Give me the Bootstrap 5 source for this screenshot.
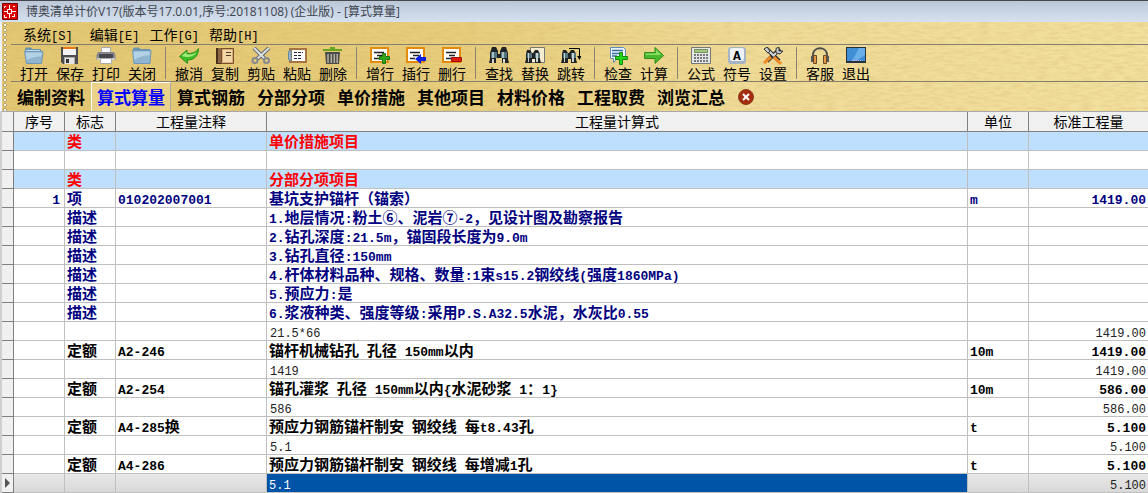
<!DOCTYPE html>
<html lang="zh-CN">
<head>
<meta charset="utf-8">
<meta name="viewport" content="width=device-width, initial-scale=1">
<title>博奥清单计价V17 - [算式算量]</title>
<link href="https://cdn.jsdelivr.net/npm/bootstrap@5.3.0/dist/css/bootstrap.min.css" rel="stylesheet">
<script src="https://cdn.jsdelivr.net/npm/bootstrap@5.3.0/dist/js/bootstrap.bundle.min.js" defer></script>
<style>
  body { font-family: "Noto Sans CJK SC", sans-serif; font-size: 14px; line-height: 18px; color: #000; background: #fff; }
  button { font: inherit; color: inherit; background: none; border: 0; padding: 0; white-space: nowrap; }
  .lt { font-family: "Liberation Mono", monospace; font-size: 13px; line-height: 0; white-space: pre; }

  /* window caption */
  .caption-bar { height: 22px; border-top: 1px solid #45484f; background: linear-gradient(#bcc8d8, #d5e1ef); }
  .caption-bar h1 { font-family: "Open Sans", "Noto Sans CJK SC", sans-serif; font-size: 12px; line-height: 20px; color: #3c434d; white-space: nowrap; }

  /* textured tool area */
  .tool-area {
    background:
      url("data:image/svg+xml,%3Csvg xmlns='http://www.w3.org/2000/svg' width='256' height='90'%3E%3Cfilter id='g'%3E%3CfeTurbulence type='fractalNoise' baseFrequency='.09 .4' numOctaves='3' stitchTiles='stitch'/%3E%3CfeColorMatrix values='0 0 0 0 .6 0 0 0 0 .42 0 0 0 0 .12 .6 0 0 0 -.22'/%3E%3C/filter%3E%3Crect width='256' height='90' filter='url(%23g)'/%3E%3C/svg%3E"),
      linear-gradient(90deg, #e3c772 0, #e7cd7c 40%, #f0dc98 65%, #f2e09e 100%);
    border-left: 2px solid #eef1f6;
    border-bottom: 1px solid #a9a9a9;
  }
  .grip { width: 9px; background: radial-gradient(circle at 2px 2px, #fff8dc 0 1px, #b0a074 1px 2px, transparent 2px) 1px 1px / 9px 5px; }
  .menu-row { height: 23px; border-bottom: 1px solid #857f6f; padding: 2px 0 0 12px; column-gap: 10px; }
  .menu-row .lt { font-size: 12px; }
  .icon-row { height: 37px; border-bottom: 1px solid #857f6f; padding: 2px 0 0 5px; }
  .tool { width: 36px; height: 34px; text-align: center; line-height: 16px; }
  .tool svg { display: block; width: 20px; height: 18px; margin: 0 auto; }
  .sep { width: 1px; height: 32px; margin: 0 5px; background: #8a8371; }
  .tab-row { height: 29px; }
  .tab-row button[role=tab] { width: 80px; height: 29px; font-size: 17px; line-height: 28px; font-weight: 700; border: 1px solid transparent; border-bottom: 0; }
  .tab-row button[aria-selected=true] { color: #00f; border-color: #fff #a7a7a7 transparent #fff; background: rgba(255, 240, 190, .3); }
  .close-tab { width: 16px; height: 16px; margin-left: 7px; }
  .close-tab svg { display: block; }

  /* quantity sheet */
  .sheet { border-left: 2px solid #d0d0d0; }
  .sheet table { width: 100%; table-layout: fixed; border-collapse: separate; border-spacing: 0; }
  .sheet th, .sheet td { height: 19px; padding: 0 2px; line-height: 18px; vertical-align: middle; border: 0 solid #bfbfbf; border-width: 0 1px 1px 0; white-space: nowrap; }
  .sheet thead th { height: 20px; line-height: 19px; font-weight: 400; text-align: center; background: #f0f0f0; border-color: #808080; }
  .sheet tbody th { background: #f0f0f0; border-color: #808080; }
  .sheet td { font-size: 15px; font-weight: 700; }
  .sheet td:last-child, .sheet th:last-child { border-right: 0; }
  .sheet td:last-child, .sheet td:nth-child(2) { text-align: right; }
  .sheet td:nth-child(2) { padding-right: 4px; }
  .group-row td { background: #bfdfff; color: #f00; }
  .item-row td { color: #000080; }
  .calc-row td { font-weight: 400; color: #222; padding-left: 3px; }
  .calc-row .lt { font-size: 12px; }
  .current-row td { background: linear-gradient(#e8e8e8, #d8d8d8); }
  .current-row td.picked { background: #0054a8; color: #fff; padding-left: 2px; }
  .current-row svg { display: block; }
</style>
</head>
<body>
<header class="caption-bar d-flex align-items-center">
  <svg class="ms-0 me-2 flex-shrink-0" width="18" height="18" viewBox="0 0 18 18" aria-hidden="true"><path fill="#d00" stroke="#700" d="M2.500.5h15v16h-15z"/><path fill="none" stroke="#fff" d="M9.500 2v4M9.500 11v4M4 8.500h3M12 8.500h4M7.500 6.500h4v4h-4zM4.500 5V3.500H6M13 3.500h2M4.500 12v2.500H7M12 13.500h3M14.500 11v3"/></svg>
  <h1 class="m-0 fw-normal">博奥清单计价V17(版本号17.0.01,序号:20181108) (企业版) - [算式算量]</h1>
</header>

<div class="tool-area d-flex">
  <div class="grip flex-shrink-0"></div>
  <div class="flex-grow-1">
    <nav class="menu-row d-flex" aria-label="菜单">
      <button type="button">系统<span class="lt">[S] </span></button>
      <button type="button">编辑<span class="lt">[E]</span></button>
      <button type="button">工作<span class="lt">[G]</span></button>
      <button type="button">帮助<span class="lt">[H]</span></button>
    </nav>

    <div class="icon-row d-flex" role="toolbar" aria-label="工具栏">
      <button type="button" class="tool"><svg viewBox="0 0 20 18"><path fill="#6d93ac" d="M1 3V1.500L2 .5h5L8.500 2H17v3H1z"/><path fill="#c3dcef" d="M2 3h14v3H2z"/><path fill="#8fb5d0" stroke="#6f98b4" d="M.5 4.500h18.500l-1.500 12h-15z"/><path fill="#b2d0e6" d="M1.500 5.500H18l-.6 4C10 9 6 12 2.500 13z"/></svg>打开</button>
      <button type="button" class="tool"><svg viewBox="0 0 20 18"><path fill="#4c4c50" d="M1 0h17v17H3l-2-2z"/><path fill="#e87818" d="M3 0h13v2H3z"/><path fill="#f2f2f2" d="M3 2h13v6H3z"/><path fill="#aaa" d="M4 10h11v7H4z"/><path fill="#e4e4e4" d="M5 11h9v6H5z"/><path fill="#333" d="M6 12h3v4H6z"/></svg>保存</button>
      <button type="button" class="tool"><svg viewBox="0 0 20 18"><path fill="#f6f6f8" stroke="#aaa" d="M5.500.5h9v7h-9z"/><path fill="#85878c" d="M2 5h16l1.500 3v5H.5V8z"/><path fill="#45474d" d="M3 7h14v4H3z"/><path fill="#c8cace" d="M1 11h18v2H1z"/><path fill="#fff" stroke="#aaa" d="M4.500 11.500h11v5h-11z"/></svg>打印</button>
      <button type="button" class="tool"><svg viewBox="0 0 20 18"><path fill="#6d93ac" d="M1 4V1.500L2 .5h5L8.500 2H18v3H1z"/><path fill="#8fb5d0" stroke="#6f98b4" d="M.5 3.500h18.500l-1 13h-16z"/><path fill="#b2d0e6" d="M1.500 4.500H18l-.4 4C10 8 6 11 2 13z"/></svg>关闭</button>
      <div class="sep"></div>
      <button type="button" class="tool"><svg viewBox="0 0 20 18"><path fill="#3fbb25" stroke="#2b8f18" d="M.5 9.500 8 3v3.500c5 0 9-1 11.500-5C19.500 9 15 13 8.500 13v3.500z"/><path fill="#a2ec7d" d="m2.500 9 5-4v2.500c4 .3 7-.2 10-2.500-2 4-6 5-10 5z"/></svg>撤消</button>
      <button type="button" class="tool"><svg viewBox="0 0 20 18"><path fill="#4a2f1b" d="M1 1h6v16H1z"/><path fill="#8f6744" d="M3 1h3v15H3z"/><path fill="#d8ae78" stroke="#77502f" d="M6.500 1.500h12v15h-12z"/><path fill="#f1d7a5" d="M8 3h9v12H8z"/><path stroke="#50341e" d="M11 5.500h5M11 8.500h5"/></svg>复制</button>
      <button type="button" class="tool"><svg viewBox="0 0 20 18"><path stroke="#62666b" stroke-width="4" d="M3 1 14 12M18 1 6 12"/><path stroke="#dadfe2" stroke-width="2" d="M3 1 14 12M18 1 6 12"/><circle cx="4" cy="13.500" r="2.500" fill="none" stroke="#86898e" stroke-width="2"/><circle cx="15.500" cy="13.500" r="2.500" fill="none" stroke="#86898e" stroke-width="2"/></svg>剪贴</button>
      <button type="button" class="tool"><svg viewBox="0 0 20 18"><path fill="#a87440" d="M2 1h18v15H2z"/><path fill="#fff" d="M5 3h13v11H5z"/><path fill="#9bb8cf" stroke="#68889f" d="M1.500 4.500 4 3v11l-2.500-1.500z"/><path stroke="#223" d="M7 5.500h9M7 8.500h7M7 11.500h8" stroke-dasharray="3 1"/></svg>粘贴</button>
      <button type="button" class="tool"><svg viewBox="0 0 20 18"><path fill="#67a51c" d="M7 0h5v2h7v2H0V2h7z"/><path fill="#494c48" d="M2 5h15l-1 12H3z"/><path stroke="#b8b1a0" stroke-width="1.500" d="M5 7v9M8.300 7v9M11.300 7v9M14.200 7v9"/></svg>删除</button>
      <div class="sep"></div>
      <button type="button" class="tool"><svg viewBox="0 0 20 18"><path fill="#fff" stroke="#e58b0c" stroke-width="2" d="M1 1h17v14H1z"/><path stroke="#222" stroke-width="1.500" d="M4 5.500h10M7 8.500h6M4 11.500h5"/><path fill="#33a51c" stroke="#187a0a" d="M12.500 6.500h3v3h4v3h-4v4h-3v-4h-3v-3h3z"/></svg>增行</button>
      <button type="button" class="tool"><svg viewBox="0 0 20 18"><path fill="#fff" stroke="#e58b0c" stroke-width="2" d="M1 1h17v14H1z"/><path stroke="#222" stroke-width="1.500" d="M4 5.500h10M7 8.500h6M4 11.500h5"/><path fill="#0a1ee8" d="m9 12 6-5v3h5v4h-5v3z"/></svg>插行</button>
      <button type="button" class="tool"><svg viewBox="0 0 20 18"><path fill="#fff" stroke="#e58b0c" stroke-width="2" d="M1 1h17v14H1z"/><path stroke="#222" stroke-width="1.500" d="M4 5.500h10M7 8.500h6M4 11.500h5"/><path fill="#e01c10" stroke="#a31007" d="M9.500 10.500h10v4h-10z"/></svg>删行</button>
      <div class="sep"></div>
      <button type="button" class="tool"><svg viewBox="0 0 20 18"><path fill="#202426" d="M3 0h4l2 4v3h2V4l2-4h4l2 6v6l1 4h-7v-5H7v5H0l1-4V6z"/><path fill="#54767d" d="M2 5h6v6H2zM12 5h6v6h-6z"/><path fill="#a9c1c6" d="M3 5h2v6H3zM13 5h2v6h-2z"/><path fill="#d8d8ce" d="M3 12h2v4H3zM14 12h2v4h-2z"/></svg>查找</button>
      <button type="button" class="tool"><svg viewBox="0 0 20 18"><path fill="#f5edce" stroke="#777" d="M5.500.5h14v15h-14z"/><path fill="#202426" d="M2 3h3l2 3h1l2-3h3l2 4v5l1 4h-6v-4H7v4H0l1-4V7z"/><path fill="#54767d" d="M2 6h5v5H2zM10 6h5v5h-5z"/><path fill="#c9d3d3" d="M3 6h1v9H3zM11 6h2v9h-2z"/></svg>替换</button>
      <button type="button" class="tool"><svg viewBox="0 0 20 18"><path fill="#202426" d="M2 3h3l2 3h1l2-3h3l2 4v5l1 4h-6v-4H7v4H0l1-4V7z"/><path fill="#54767d" d="M2 6h5v5H2zM10 6h5v5h-5z"/><path fill="#c9d3d3" d="M3 6h1v9H3zM11 6h2v9h-2z"/><path fill="none" stroke="#000" d="M8 1.500h10.500V11"/><path d="M16 9h4.500L18.500 13z"/></svg>跳转</button>
      <div class="sep"></div>
      <button type="button" class="tool"><svg viewBox="0 0 20 18"><path fill="#e9f3fb" stroke="#5f8db5" d="M2.500.5h13l2 2v9h-8l-4 4v-4h-3z"/><path stroke="#3b6f9f" stroke-width="1.500" d="M4 3.500h11M4 6.500h7M4 9h5"/><path fill="#25d51c" stroke="#128a0c" d="M11.500 5.500h3v4h5v3h-5v5h-3v-5h-4v-3h4z"/></svg>检查</button>
      <button type="button" class="tool"><svg viewBox="0 0 20 18"><path fill="#48bb2c" stroke="#308c1b" d="M.5 5.500H11v-5l8.500 8-8.500 8v-5H.5z"/><path fill="#8bdd68" d="M1.500 6.500H12v-4l5 5.500h-15.500z"/></svg>计算</button>
      <div class="sep"></div>
      <button type="button" class="tool"><svg viewBox="0 0 20 18"><path fill="#e6e7e5" stroke="#74787a" d="M.5.500h19v16H.5z"/><path fill="#a6c487" stroke="#719256" d="M3.500 2.500h13v3h-13z"/><path stroke="#73797e" stroke-width="2" stroke-dasharray="2 1" d="M3 8h14M3 11h14M3 14h14"/></svg>公式</button>
      <button type="button" class="tool"><svg viewBox="0 0 20 18"><rect x="1" y="0" width="18" height="17" rx="3" fill="#a6b4c4"/><rect x="3" y="1" width="14" height="13" rx="2" fill="#edf3f9"/><text x="10" y="13" text-anchor="middle" font-family="Liberation Mono" font-size="13" font-weight="700">A</text></svg>符号</button>
      <button type="button" class="tool"><svg viewBox="0 0 20 18"><path stroke="#26282a" stroke-width="4" d="m3 1 13 13M17 2 4 14"/><path stroke="#d4dadd" stroke-width="2" d="m3 1 8 8M16 3l-6 6"/><path stroke="#f08a26" stroke-width="3" d="m11 10 7 7M8 10l-7 6"/><path fill="#c7cdd0" stroke="#333" d="M13 1.500 16 0v4h4l-3 3-4-1zM1 2l3-2 3 4-2 2z"/></svg>设置</button>
      <div class="sep"></div>
      <button type="button" class="tool"><svg viewBox="0 0 20 18"><path fill="none" stroke="#4a4b4d" stroke-width="2" d="M3 13V8c0-9 14-9 14 0v5"/><path fill="#e39a43" stroke="#6a4826" d="M3.500 8.500h3v8h-3zM13.500 8.500h3v8h-3z"/><path fill="#55585c" d="M1 9h2v6H1zM17 9h2v6h-2z"/></svg>客服</button>
      <button type="button" class="tool"><svg viewBox="0 0 20 18"><path fill="#26323e" d="M0 0h20v16H0z"/><path fill="#3f8ed6" d="M1 1h18v13H1z"/><path fill="#68aee7" d="M13 1h6v7l-9 6H6z"/><path stroke="#e6a6df" d="M6 13.500h9" stroke-dasharray="1 1"/></svg>退出</button>
    </div>

    <div class="tab-row d-flex align-items-center">
      <div class="d-flex" role="tablist">
        <button type="button" role="tab" aria-selected="false">编制资料</button>
        <button type="button" role="tab" aria-selected="true">算式算量</button>
        <button type="button" role="tab" aria-selected="false">算式钢筋</button>
        <button type="button" role="tab" aria-selected="false">分部分项</button>
        <button type="button" role="tab" aria-selected="false">单价措施</button>
        <button type="button" role="tab" aria-selected="false">其他项目</button>
        <button type="button" role="tab" aria-selected="false">材料价格</button>
        <button type="button" role="tab" aria-selected="false">工程取费</button>
        <button type="button" role="tab" aria-selected="false">浏览汇总</button>
      </div>
      <button type="button" class="close-tab" aria-label="关闭"><svg width="16" height="16" viewBox="0 0 16 16"><circle cx="8" cy="8" r="7.500" fill="#a52c0c" stroke="#8c3a20"/><path stroke="#fff" stroke-width="2" d="m5 5 6 6M11 5l-6 6"/></svg></button>
    </div>
  </div>
</div>

<main class="sheet">
  <table>
    <colgroup><col style="width:12px"><col style="width:51px"><col style="width:51px"><col style="width:151px"><col><col style="width:61px"><col style="width:119px"></colgroup>
    <thead>
      <tr><th></th><th>序号</th><th>标志</th><th>工程量注释</th><th>工程量计算式</th><th>单位</th><th>标准工程量</th></tr>
    </thead>
    <tbody>
      <tr class="group-row"><th></th><td></td><td>类</td><td></td><td>单价措施项目</td><td></td><td></td></tr>
      <tr><th></th><td></td><td></td><td></td><td></td><td></td><td></td></tr>
      <tr class="group-row"><th></th><td></td><td>类</td><td></td><td>分部分项项目</td><td></td><td></td></tr>
      <tr class="item-row"><th></th><td><span class="lt">1</span></td><td>项</td><td><span class="lt">010202007001</span></td><td>基坑支护锚杆（锚索）</td><td><span class="lt">m</span></td><td><span class="lt">1419.00</span></td></tr>
      <tr class="item-row"><th></th><td></td><td>描述</td><td></td><td><span class="lt">1.</span>地层情况<span class="lt">:</span>粉土⑥、泥岩⑦<span class="lt">-2</span>，见设计图及勘察报告</td><td></td><td></td></tr>
      <tr class="item-row"><th></th><td></td><td>描述</td><td></td><td><span class="lt">2.</span>钻孔深度<span class="lt">:21.5m</span>，锚固段长度为<span class="lt">9.0m</span></td><td></td><td></td></tr>
      <tr class="item-row"><th></th><td></td><td>描述</td><td></td><td><span class="lt">3.</span>钻孔直径<span class="lt">:150mm</span></td><td></td><td></td></tr>
      <tr class="item-row"><th></th><td></td><td>描述</td><td></td><td><span class="lt">4.</span>杆体材料品种、规格、数量<span class="lt">:1</span>束<span class="lt">s15.2</span>钢绞线<span class="lt">(</span>强度<span class="lt">1860MPa)</span></td><td></td><td></td></tr>
      <tr class="item-row"><th></th><td></td><td>描述</td><td></td><td><span class="lt">5.</span>预应力<span class="lt">:</span>是</td><td></td><td></td></tr>
      <tr class="item-row"><th></th><td></td><td>描述</td><td></td><td><span class="lt">6.</span>浆液种类、强度等级<span class="lt">:</span>采用<span class="lt">P.S.A32.5</span>水泥，水灰比<span class="lt">0.55</span></td><td></td><td></td></tr>
      <tr class="calc-row"><th></th><td></td><td></td><td></td><td><span class="lt">21.5*66</span></td><td></td><td><span class="lt">1419.00</span></td></tr>
      <tr><th></th><td></td><td>定额</td><td><span class="lt">A2-246</span></td><td>锚杆机械钻孔<span class="lt"> </span>孔径<span class="lt"> 150mm</span>以内</td><td><span class="lt">10m</span></td><td><span class="lt">1419.00</span></td></tr>
      <tr class="calc-row"><th></th><td></td><td></td><td></td><td><span class="lt">1419</span></td><td></td><td><span class="lt">1419.00</span></td></tr>
      <tr><th></th><td></td><td>定额</td><td><span class="lt">A2-254</span></td><td>锚孔灌浆<span class="lt"> </span>孔径<span class="lt"> 150mm</span>以内<span class="lt">{</span>水泥砂浆<span class="lt"> 1</span>：<span class="lt">1}</span></td><td><span class="lt">10m</span></td><td><span class="lt">586.00</span></td></tr>
      <tr class="calc-row"><th></th><td></td><td></td><td></td><td><span class="lt">586</span></td><td></td><td><span class="lt">586.00</span></td></tr>
      <tr><th></th><td></td><td>定额</td><td><span class="lt">A4-285</span>换</td><td>预应力钢筋锚杆制安<span class="lt"> </span>钢绞线<span class="lt"> </span>每<span class="lt">t8.43</span>孔</td><td><span class="lt">t</span></td><td><span class="lt">5.100</span></td></tr>
      <tr class="calc-row"><th></th><td></td><td></td><td></td><td><span class="lt">5.1</span></td><td></td><td><span class="lt">5.100</span></td></tr>
      <tr><th></th><td></td><td>定额</td><td><span class="lt">A4-286</span></td><td>预应力钢筋锚杆制安<span class="lt"> </span>钢绞线<span class="lt"> </span>每增减<span class="lt">1</span>孔</td><td><span class="lt">t</span></td><td><span class="lt">5.100</span></td></tr>
      <tr class="calc-row current-row"><th><svg width="7" height="10" viewBox="0 0 7 10"><path fill="#555" d="M1 0l5 5-5 5z"/></svg></th><td></td><td></td><td></td><td class="picked"><span class="lt">5.1</span></td><td></td><td><span class="lt">5.100</span></td></tr>
    </tbody>
  </table>
</main>
</body>
</html>
